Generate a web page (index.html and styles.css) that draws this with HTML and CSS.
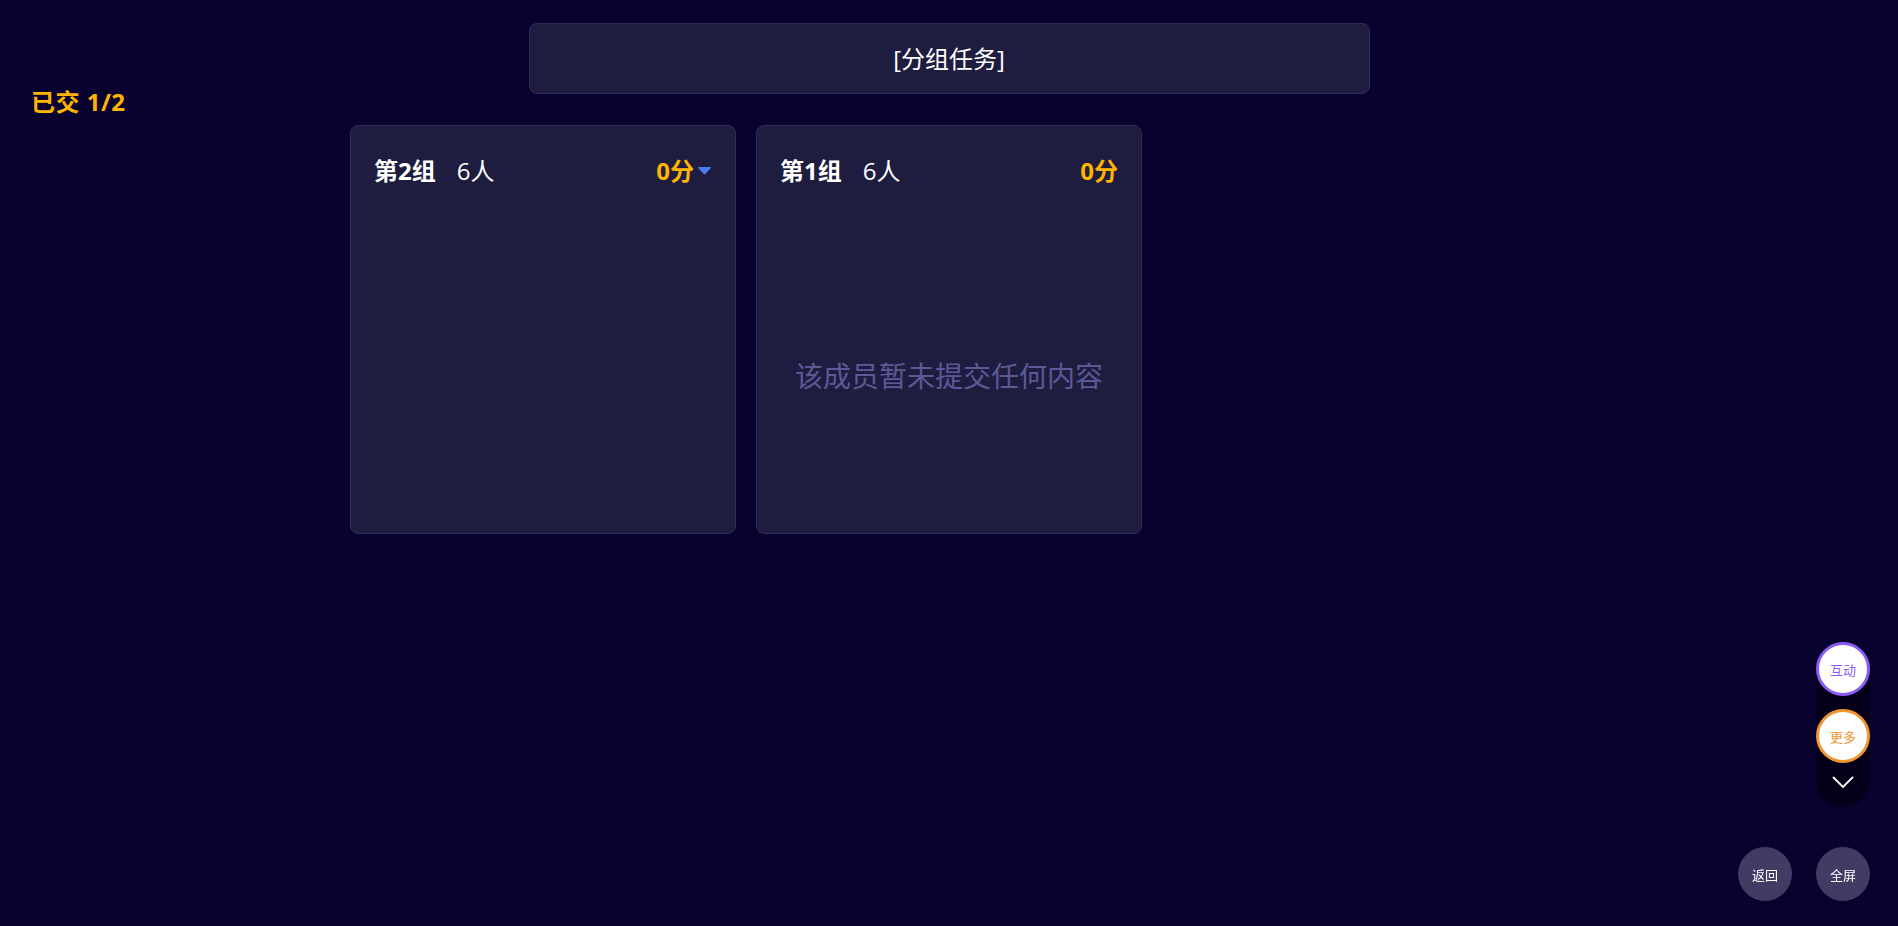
FILE: index.html
```html
<!DOCTYPE html>
<html lang="zh-CN">
<head>
  <meta charset="UTF-8" />
  <meta name="viewport" content="width=device-width, initial-scale=1.0"/>
  <title>分组任务</title>
  <link rel="stylesheet" href="styles.css">
</head>
<body>
  <header class="task-title">[分组任务]</header>

  <div class="summary">已交 1/2</div>

  <section class="group-grid">
    <div class="group-card">
      <div class="group-head">
        <div class="group-name"><b>第2组</b><span>6人</span></div>
        <div class="group-score">0分
          <svg class="caret" width="15" height="9" viewBox="0 0 15 9"><path d="M1.5 1 H13.5 Q14.6 1 13.8 2 L8.3 8 Q7.5 8.8 6.7 8 L1.2 2 Q0.4 1 1.5 1 Z" fill="#4a7cf0"/></svg>
        </div>
      </div>
      <div class="group-body"></div>
    </div>

    <div class="group-card">
      <div class="group-head">
        <div class="group-name"><b>第1组</b><span>6人</span></div>
        <div class="group-score">0分</div>
      </div>
      <div class="group-body">
        <p class="empty">该成员暂未提交任何内容</p>
      </div>
    </div>
  </section>

  <!-- floating tools -->
  <div class="tool-bar">
    <div class="tool-btn interact">互动</div>
    <div class="tool-btn more">更多</div>
    <svg class="fold" width="22" height="12" viewBox="0 0 22 12"><polyline points="1,1 11,11 21,1" fill="none" stroke="#fff" stroke-width="1.8"/></svg>
  </div>

  <div class="corner-btns">
    <div class="round-btn">返回</div>
    <div class="round-btn">全屏</div>
  </div>
</body>
</html>
```

FILE: styles.css
```css
body {
  margin: 0;
  background: #09022f;
  color: #fff;
  font-family: "Open Sans", "Noto Sans CJK SC", sans-serif;
  min-height: 926px;
}

.task-title {
  width: 841px;
  height: 71px;
  box-sizing: border-box;
  margin: 23px auto 0;
  background: #1e1d40;
  border: 1px solid #2e2b5c;
  border-radius: 8px;
  font-size: 24px;
  line-height: 69px;
  text-align: center;
}

.summary {
  margin-top: -8px;
  height: 31px;
  padding-left: 31px;
  line-height: 31px;
  font-size: 24px;
  font-weight: bold;
  letter-spacing: 0.5px;
  color: #ffb400;
}

.group-grid {
  width: 1198px;
  margin: 8px auto 0;
  display: grid;
  grid-template-columns: repeat(3, 1fr);
  gap: 20px;
}

.group-card {
  height: 409px;
  box-sizing: border-box;
  background: #1e1d40;
  border: 1px solid #2e2b5c;
  border-radius: 8px;
  display: flex;
  flex-direction: column;
}

.group-head {
  display: flex;
  justify-content: space-between;
  align-items: center;
  padding: 23px 23px 28px;
  height: 40px;
  font-size: 24px;
}

.group-name b {
  margin-right: 21px;
}

.group-score {
  display: flex;
  align-items: center;
  font-weight: bold;
  color: #ffb400;
}

.caret {
  margin-left: 3px;
  margin-top: 2px;
}

.group-body {
  flex: 1;
  display: flex;
  align-items: center;
  justify-content: center;
}

.empty {
  margin: 0;
  font-size: 28px;
  color: #5e5896;
}

.tool-bar {
  position: fixed;
  right: 28px;
  top: 642px;
  width: 54px;
  height: 165px;
  background: #05001a;
  border-radius: 27px;
  display: flex;
  flex-direction: column;
  align-items: center;
}

.tool-btn {
  width: 54px;
  height: 54px;
  box-sizing: border-box;
  border-radius: 50%;
  background: #fff;
  border: 3px solid #8a5cf6;
  color: #8a5cf6;
  font-size: 13px;
  display: flex;
  align-items: center;
  justify-content: center;
}

.tool-btn.more {
  margin-top: 13px;
  border-color: #f0962e;
  color: #f0962e;
}

.fold {
  margin-top: 13px;
}

.corner-btns {
  position: fixed;
  right: 28px;
  bottom: 25px;
  display: flex;
  gap: 24px;
}

.round-btn {
  width: 54px;
  height: 54px;
  border-radius: 50%;
  background: #433b63;
  font-size: 13px;
  display: flex;
  align-items: center;
  justify-content: center;
}
```
